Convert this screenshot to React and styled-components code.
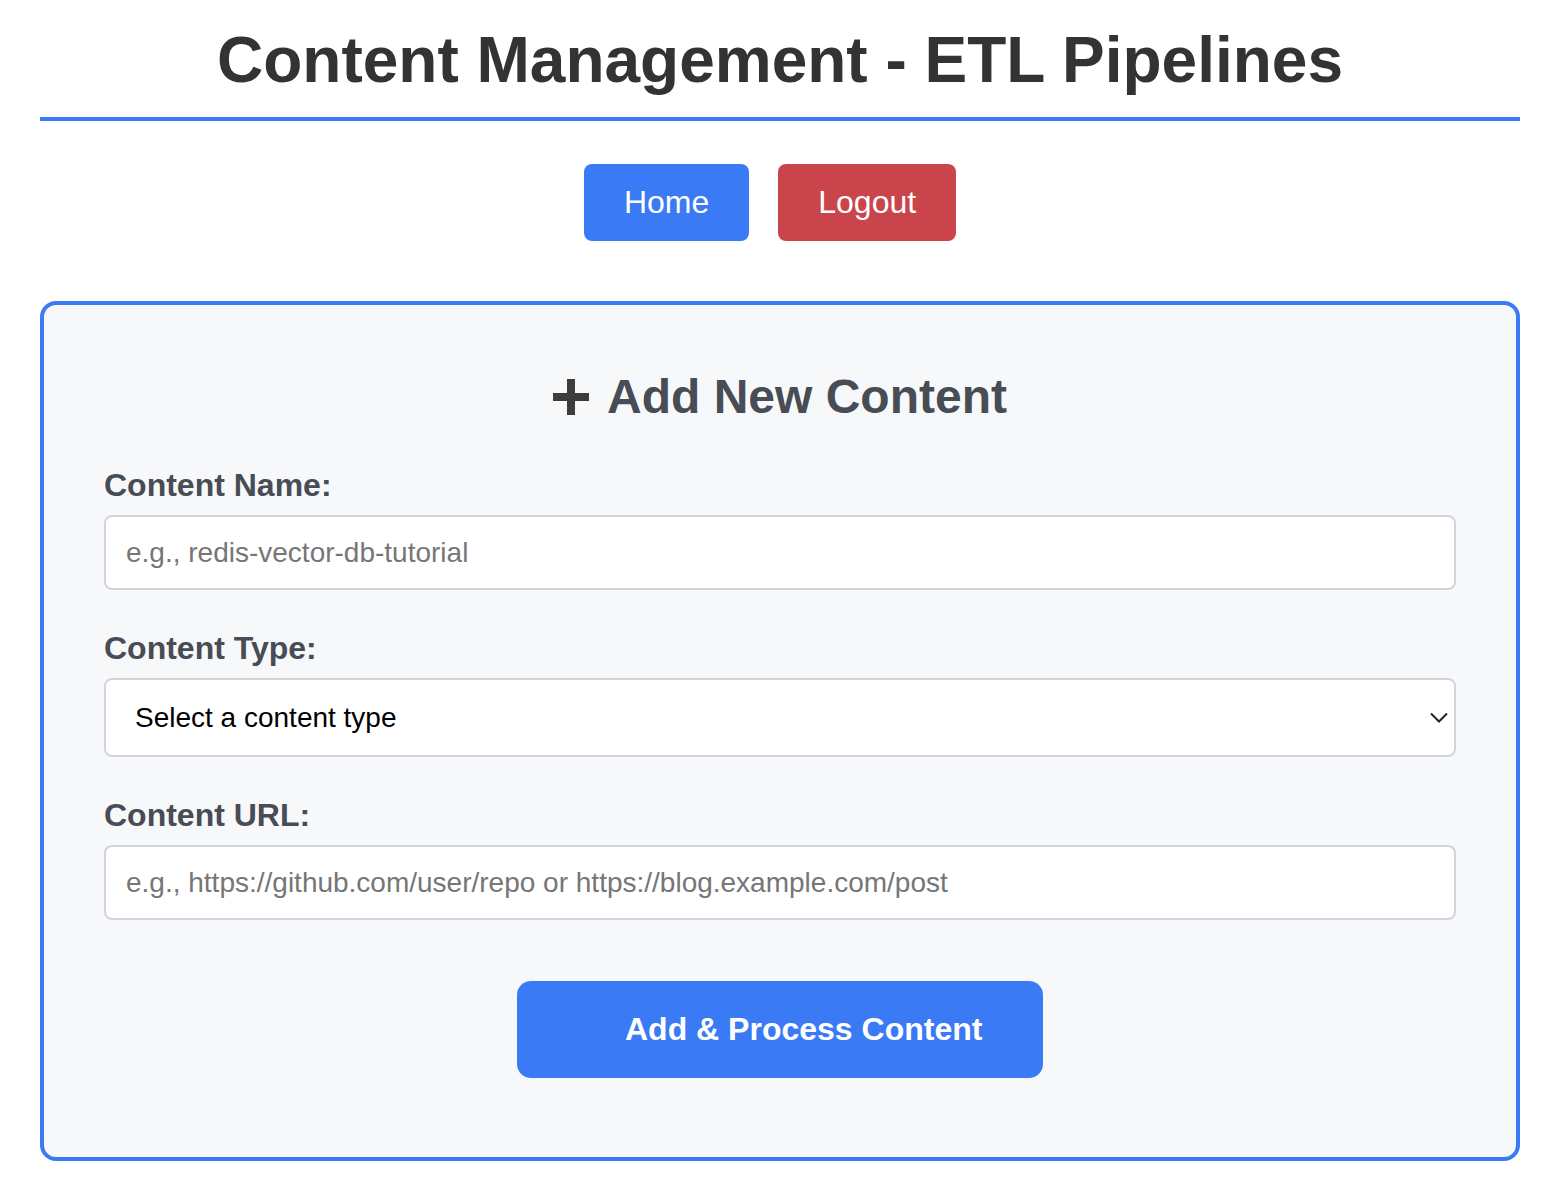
import React from 'react';
import styled, { createGlobalStyle } from 'styled-components';

const GlobalStyle = createGlobalStyle`
  body {
    margin: 0;
    background: #ffffff;
    font-family: "Liberation Sans", Arial, Helvetica, sans-serif;
  }
`;

const Page = styled.div`
  padding: 0 30px 36px 40px;
  width: 1480px;
`;

const Header = styled.header`
  padding-top: 23px;
  padding-bottom: 20px;
  border-bottom: 4px solid #3a7bf5;
`;

const Title = styled.h1`
  margin: 0;
  text-align: center;
  font-size: 64px;
  font-weight: bold;
  color: #333333;
  line-height: normal;
`;

const Nav = styled.nav`
  display: flex;
  justify-content: center;
  gap: 9px;
  margin-top: 43px;
`;

const NavButton = styled.button`
  margin-right: 20px;
  background-color: ${(props) => (props.$danger ? '#c9454b' : '#3a7bf5')};
  color: #ffffff;
  border: none;
  border-radius: 8px;
  padding: 20px 40px;
  font-family: inherit;
  font-size: 32px;
  line-height: 37px;
  cursor: pointer;
`;

const Card = styled.section`
  margin-top: 60px;
  border: 4px solid #3a7bf5;
  border-radius: 16px;
  background: #f7f8fa;
  padding: 64px 60px 79px;
`;

const CardTitle = styled.h2`
  margin: 0 0 43px;
  display: flex;
  justify-content: center;
  align-items: center;
  gap: 18px;
  font-size: 48px;
  font-weight: bold;
  color: #474c55;
  line-height: normal;
`;

const FormGroup = styled.div`
  margin-bottom: ${(props) => (props.$last ? '0' : '40px')};
`;

const Label = styled.label`
  display: block;
  margin-bottom: 11px;
  font-size: 32px;
  font-weight: bold;
  color: #474c55;
  line-height: 37px;
`;

const TextInput = styled.input`
  box-sizing: border-box;
  width: 100%;
  height: 75px;
  padding: 0 20px;
  border: 2px solid #d1d5db;
  border-radius: 8px;
  background: #ffffff;
  font-family: inherit;
  font-size: 28px;
  color: #111;

  &::placeholder {
    color: #767676;
  }
`;

const SelectWrap = styled.div`
  position: relative;
`;

const Select = styled.select`
  box-sizing: border-box;
  width: 100%;
  height: 79px;
  padding: 0 29px;
  border: 2px solid #d1d5db;
  border-radius: 8px;
  background: #ffffff;
  appearance: none;
  font-family: inherit;
  font-size: 28px;
  color: #000000;
`;

const Chevron = styled.svg`
  position: absolute;
  right: 8px;
  top: 34px;
  pointer-events: none;
`;

const SubmitRow = styled.div`
  display: flex;
  justify-content: center;
  margin-top: 61px;
`;

const SubmitButton = styled.button`
  display: flex;
  align-items: center;
  width: 526px;
  height: 97px;
  padding: 0 60px;
  border: none;
  border-radius: 14px;
  background: #3a7bf5;
  color: #ffffff;
  font-family: inherit;
  font-size: 32px;
  font-weight: bold;
  cursor: pointer;
`;

const SpinnerSlot = styled.span`
  display: inline-block;
  width: 32px;
  height: 32px;
  margin-right: 16px;
  visibility: hidden;
`;

const PlusIcon = () => (
  <svg width="36" height="36" viewBox="0 0 36 36" aria-hidden="true">
    <rect x="14" y="0" width="8" height="36" fill="#3d3d3d" />
    <rect x="0" y="14" width="36" height="8" fill="#3d3d3d" />
  </svg>
);

const App = () => {
  return (
    <Page>
      <GlobalStyle />
      <Header>
        <Title>Content Management - ETL Pipelines</Title>
      </Header>
      <Nav>
        <NavButton>Home</NavButton>
        <NavButton $danger>Logout</NavButton>
      </Nav>
      <Card>
        <CardTitle>
          <PlusIcon />
          <span>Add New Content</span>
        </CardTitle>
        <FormGroup>
          <Label htmlFor="content-name">Content Name:</Label>
          <TextInput id="content-name" placeholder="e.g., redis-vector-db-tutorial" />
        </FormGroup>
        <FormGroup>
          <Label htmlFor="content-type">Content Type:</Label>
          <SelectWrap>
            <Select id="content-type" defaultValue="">
              <option value="">Select a content type</option>
              <option value="github">GitHub Repository</option>
              <option value="blog">Blog Post</option>
            </Select>
            <Chevron width="18" height="11" viewBox="0 0 18 11" aria-hidden="true">
              <path d="M1 1.5l8 8 8-8" fill="none" stroke="#222" strokeWidth="2" />
            </Chevron>
          </SelectWrap>
        </FormGroup>
        <FormGroup $last>
          <Label htmlFor="content-url">Content URL:</Label>
          <TextInput
            id="content-url"
            placeholder="e.g., https://github.com/user/repo or https://blog.example.com/post"
          />
        </FormGroup>
        <SubmitRow>
          <SubmitButton>
            <SpinnerSlot />
            Add &amp; Process Content
          </SubmitButton>
        </SubmitRow>
      </Card>
    </Page>
  );
};

export default App;
